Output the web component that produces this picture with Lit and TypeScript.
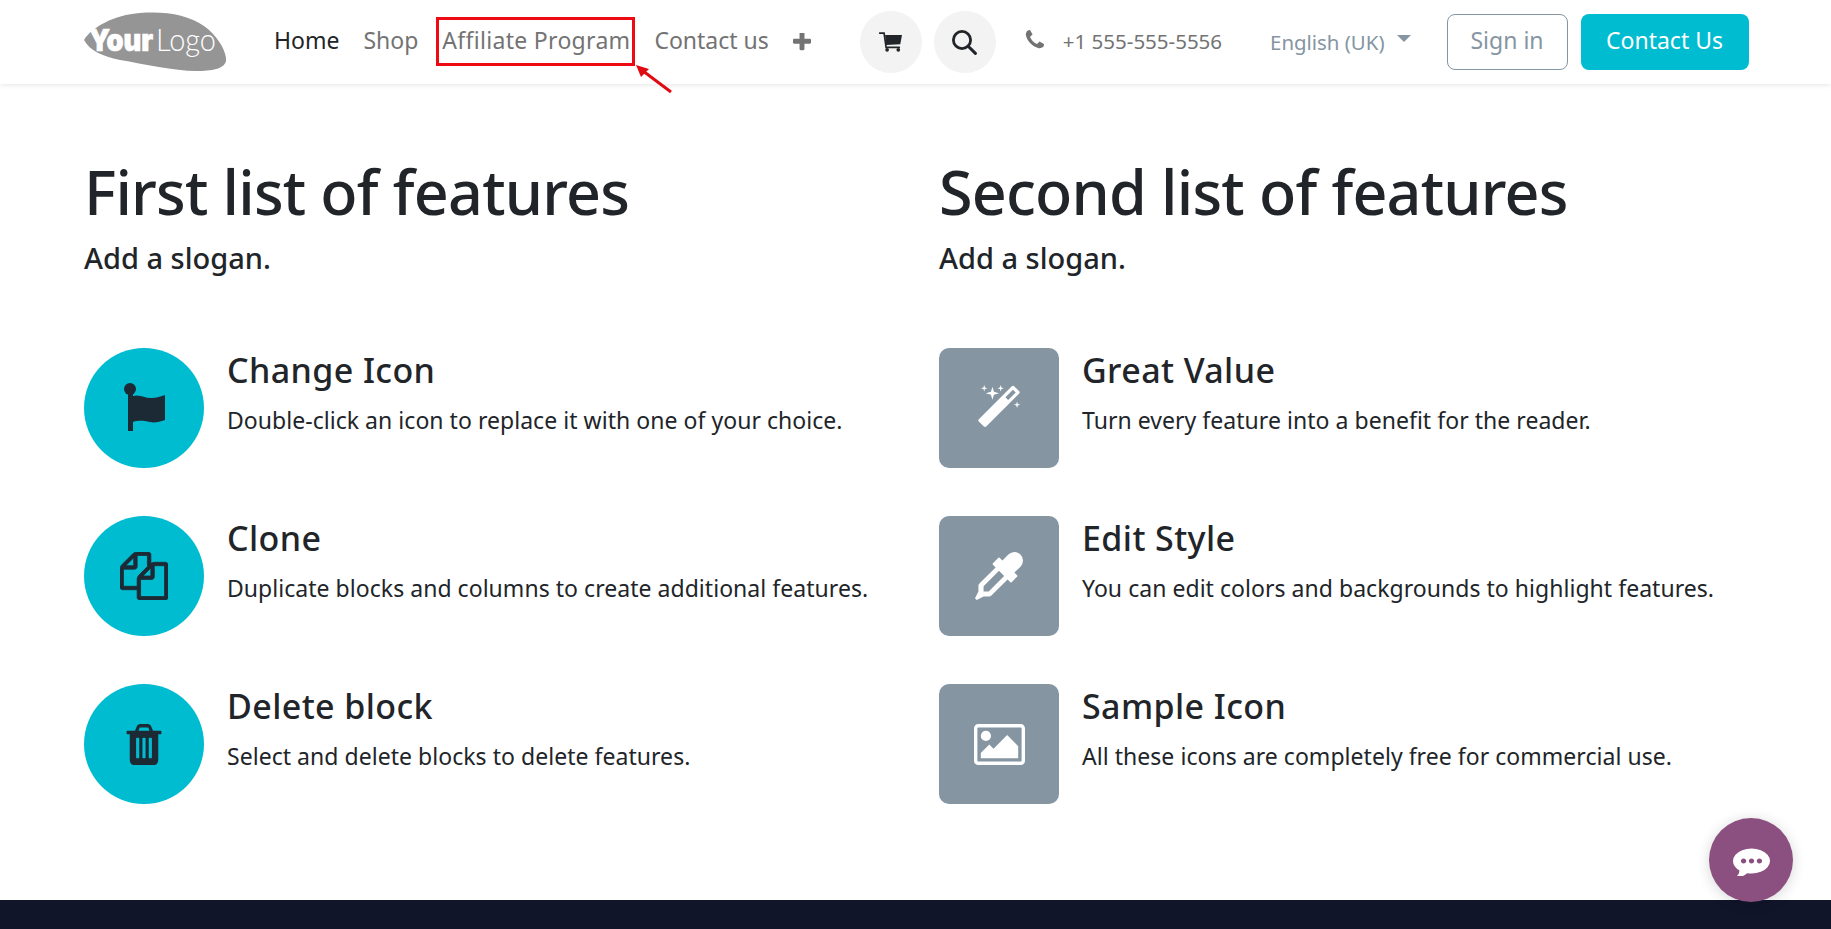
import { LitElement, html, css } from "lit";
import { customElement } from "lit/decorators.js";

const P = {
  phone: "M1600 1240q0 27-10 70.500t-21 68.500q-21 50-122 106-94 51-186 51-27 0-53-3.500t-57.500-12.500-47-14.500-55.500-20.500-49-18q-98-35-175-83-127-79-264-216t-216-264q-48-77-83-175-3-9-18-49t-20.500-55.500-14.500-47-12.500-57.500-3.500-53q0-92 51-186 56-101 106-122 25-11 68.500-21t70.500-10q14 0 21 3 18 6 53 76 11 19 30 54t35 63.500 31 53.500q3 4 17.500 25t21.500 35.500 7 28.500q0 20-28.500 50t-62 55-62 53-28.500 46q0 9 5 22.500t8.500 20.500 14 24 11.500 19q76 137 174 235t235 174q2 1 19 11.500t24 14 20.500 8.500 22.500 5q18 0 46-28.500t53-62 55-62 50-28.500q14 0 28.500 7t35.500 21.500 25 17.500q25 15 53.500 31t63.500 35 54 30q70 35 76 53 3 7 3 21z",
  plus: "M1600 736v192q0 40-28 68t-68 28h-416v416q0 40-28 68t-68 28h-192q-40 0-68-28t-28-68v-416h-416q-40 0-68-28t-28-68v-192q0-40 28-68t68-28h416v-416q0-40 28-68t68-28h192q40 0 68 28t28 68v416h416q40 0 68 28t28 68z",
  files: "M1696 384q40 0 68 28t28 68v1216q0 40-28 68t-68 28h-960q-40 0-68-28t-28-68v-288h-544q-40 0-68-28t-28-68v-672q0-40 20-88t48-76l408-408q28-28 76-48t88-20h416q40 0 68 28t28 68v328q68-40 128-40h416zm-544 213l-299 299h299v-299zm-640-384l-299 299h299v-299zm196 647l316-316v-416h-384v416q0 40-28 68t-68 28h-416v640h512v-256q0-40 20-88t48-76zm956 804v-1152h-384v416q0 40-28 68t-68 28h-416v640h896z",
  trash: "M704 1376v-704q0-14-9-23t-23-9h-64q-14 0-23 9t-9 23v704q0 14 9 23t23 9h64q14 0 23-9t9-23zm256 0v-704q0-14-9-23t-23-9h-64q-14 0-23 9t-9 23v704q0 14 9 23t23 9h64q14 0 23-9t9-23zm256 0v-704q0-14-9-23t-23-9h-64q-14 0-23 9t-9 23v704q0 14 9 23t23 9h64q14 0 23-9t9-23zm-544-992h448l-48-117q-7-9-17-11h-317q-10 2-17 11zm928 32v64q0 14-9 23t-23 9h-96v948q0 83-47 143.500t-113 60.500h-832q-66 0-113-58.500t-47-141.500v-952h-96q-14 0-23-9t-9-23v-64q0-14 9-23t23-9h309l70-167q15-37 54-63t79-26h320q40 0 79 26t54 63l70 167h309q14 0 23 9t9 23z",
  magic: "M1254 581l293-293-107-107-293 293zm447-293q0 27-18 45l-1286 1286q-18 18-45 18t-45-18l-198-198q-18-18-18-45t18-45l1286-1286q18-18 45-18t45 18l198 198q18 18 18 45zm-1351-190l98 30-98 30-30 98-30-98-98-30 98-30 30-98zm350 162l196 60-196 60-60 196-60-196-196-60 196-60 60-196zm930 478l98 30-98 30-30 98-30-98-98-30 98-30 30-98zm-640-640l98 30-98 30-30 98-30-98-98-30 98-30 30-98z",
  dropper: "M1698 94q94 94 94 226.500t-94 225.500l-225 223 104 104q10 10 10 23t-10 23l-210 210q-10 10-23 10t-23-10l-105-105-603 603q-37 37-90 37h-203l-256 128-64-64 128-256v-203q0-53 37-90l603-603-105-105q-10-10-10-23t10-23l210-210q10-10 23-10t23 10l104 104 223-225q93-94 225.500-94t226.500 94zm-1186 1378l576-576-192-192-576 576v192h192z",
  picture: "M576 576q0 80-56 136t-136 56-136-56-56-136 56-136 136-56 136 56 56 136zm1024 384v448h-1408v-192l320-320 160 160 512-512zm96-704h-1600q-13 0-22.500 9.500t-9.500 22.500v1216q0 13 9.500 22.500t22.500 9.500h1600q13 0 22.500-9.500t9.500-22.500v-1216q0-13-9.500-22.500t-22.500-9.500zm160 32v1216q0 66-47 113t-113 47h-1600q-66 0-113-47t-47-113v-1216q0-66 47-113t113-47h1600q66 0 113 47t47 113z",
  chat: "M640 896q0-53-37.500-90.500t-90.500-37.500-90.500 37.500-37.500 90.500 37.500 90.500 90.500 37.500 90.500-37.500 37.500-90.500zm384 0q0-53-37.500-90.500t-90.500-37.500-90.500 37.500-37.500 90.500 37.500 90.500 90.500 37.500 90.500-37.500 37.500-90.500zm384 0q0-53-37.500-90.500t-90.500-37.500-90.500 37.500-37.500 90.500 37.500 90.500 90.500 37.500 90.500-37.500 37.500-90.500zm384 0q0 174-120 321.500t-326 233-450 85.500q-110 0-211-18-173 173-435 229-52 10-86 13-12 1-22-6t-13-18q-4-15 20-37 5-5 23.500-21.500t25.500-23.500 23.500-25.500 24-31.500 20.500-37 20-48 14.500-57.500 12.500-72.500q-146-90-229.500-216.500t-83.500-269.500q0-174 120-321.500t326-233 450-85.500 450 85.500 326 233 120 321.500z",
};

const glyph = (cls: string, vb: string, d: string) =>
  html`<svg class=${cls} viewBox=${vb} preserveAspectRatio="none" aria-hidden="true"><path d=${d} fill="currentColor"></path></svg>`;

const flag = html`<svg class="i-flag" viewBox="0 0 41 48" aria-hidden="true">
  <g fill="currentColor">
    <circle cx="6" cy="6" r="6"></circle>
    <rect x="4" y="6" width="5" height="42"></rect>
    <path d="M9 13C16 11 20 15 27 15C33 15 37 13 41 12V37C35 39 31 40 26 39C20 38 15 37 9 39Z"></path>
  </g>
</svg>`;

const cart = html`<svg class="i-cart" viewBox="0 0 68 58" aria-hidden="true">
  <g fill="none" stroke="currentColor" stroke-width="5" stroke-linecap="round">
    <path d="M2 3H15L21 45H60"></path>
  </g>
  <path fill="currentColor" d="M18 8H68L63 36L21 38Z"></path>
  <circle cx="24" cy="52" r="5.5" fill="currentColor"></circle>
  <circle cx="57" cy="52" r="5.5" fill="currentColor"></circle>
</svg>`;

const search = html`<svg class="i-search" viewBox="0 0 25 25" aria-hidden="true">
  <circle cx="10" cy="10" r="8.6" fill="none" stroke="currentColor" stroke-width="2.8"></circle>
  <path d="M16.2 16.2L23.4 23.4" fill="none" stroke="currentColor" stroke-width="3" stroke-linecap="round"></path>
</svg>`;

const F1 = [
  { t: "Change Icon", d: "Double-click an icon to replace it with one of your choice.", i: flag },
  { t: "Clone", d: "Duplicate blocks and columns to create additional features.", i: glyph("i-files i-clone", "0 0 1792 1792", P.files) },
  { t: "Delete block", d: "Select and delete blocks to delete features.", i: glyph("i-trash", "128 128 1536 1536", P.trash) },
];
const F2 = [
  { t: "Great Value", d: "Turn every feature into a benefit for the reader.", i: glyph("i-magic", "0 0 1792 1792", P.magic) },
  { t: "Edit Style", d: "You can edit colors and backgrounds to highlight features.", i: glyph("i-files", "0 0 1792 1792", P.dropper) },
  { t: "Sample Icon", d: "All these icons are completely free for commercial use.", i: glyph("i-pic", "-64 128 1920 1536", P.picture) },
];

@customElement("app-root")
export class AppRoot extends LitElement {
  static styles = css`
    :host {
      display: flex;
      flex-direction: column;
      height: 929px;
      overflow: hidden;
      position: relative;
      background: #fff;
      color: #212529;
      font-family: "Noto Sans", "Open Sans", sans-serif;
    }
    .bar {
      flex: none;
      height: 84px;
      display: flex;
      align-items: center;
      padding-left: 84px;
      background: #fff;
      box-shadow: 0 1px 5px rgba(0, 0, 0, 0.1);
      position: relative;
      z-index: 1;
    }
    .logo { width: 142px; height: 62px; flex: none; }
    .nav { display: flex; align-items: center; gap: 24px; margin-left: 48px; font-size: 23px; color: #737373; padding-bottom: 5px; }
    .nav .wide { letter-spacing: 0.3px; }
    .nav .on { color: #212529; }
    .i-plus { width: 18px; height: 18px; color: #737373; margin-top: 5px; }
    .round {
      width: 62px; height: 62px; border-radius: 50%; background: #f3f3f3;
      display: flex; align-items: center; justify-content: center; flex: none; color: #212529;
    }
    .tools { display: flex; gap: 12px; margin-left: 49px; }
    .i-cart { width: 23px; height: 20px; }
    .i-search { width: 25px; height: 25px; }
    .phone { display: flex; align-items: center; gap: 19px; margin-left: 29px; font-size: 20.5px; color: #737373; padding-bottom: 2px; }
    .i-phone { width: 19px; height: 19px; margin-top: -4px; }
    .lang { display: flex; align-items: center; gap: 12px; margin-left: 48px; font-size: 20.4px; color: #8595a2; padding-bottom: 1px; }
    .caret { width: 0; height: 0; border-left: 7.5px solid transparent; border-right: 7.5px solid transparent; border-top: 7px solid #8595a2; margin-top: -6px; }
    .btn {
      height: 56px; box-sizing: border-box; display: flex; align-items: center; justify-content: center;
      border-radius: 8px; font-size: 23px; padding-bottom: 4px;
    }
    .signin { width: 121px; border: 1px solid #8595a2; color: #8595a2; margin-left: 36px; }
    .contact { width: 168px; background: #00bcd0; color: #fff; margin-left: 13px; }

    .main { flex: 1; display: grid; grid-template-columns: 810px 810px; column-gap: 45px; padding: 0 82px 0 84px; align-content: start; }
    .head { padding-top: 70px; height: 264px; box-sizing: border-box; }
    h1 { margin: 0; font-size: 61px; line-height: 76px; font-weight: 500; letter-spacing: -0.8px; }
    .slogan { margin: 10px 0 0; font-size: 29px; line-height: 36px; font-weight: 500; }
    .list { display: flex; flex-direction: column; gap: 48px; }
    .item { display: flex; gap: 23px; }
    .ic { width: 120px; height: 120px; flex: none; display: flex; align-items: center; justify-content: center; }
    .circle { border-radius: 50%; background: #00bcd0; color: #1b2a35; }
    .square { border-radius: 10px; background: #8595a2; color: #fff; }
    .i-flag { width: 41px; height: 48px; margin-top: -2px; }
    .i-files { width: 48px; height: 48px; }
    .i-clone path { stroke: currentColor; stroke-width: 30; }
    .i-trash { width: 38px; height: 41px; }
    .i-magic { width: 46px; height: 46px; }
    .i-pic { width: 51px; height: 41px; }
    h3 { margin: 0; font-size: 34px; line-height: 44px; font-weight: 500; letter-spacing: 0.4px; }
    .tx p { margin: 12px 0 0; font-size: 23px; line-height: 32px; letter-spacing: 0.04px; }

    .foot { flex: none; height: 29px; background: #11152a; }
    .chat {
      position: absolute; left: 1709px; top: 818px; width: 84px; height: 84px; border-radius: 50%;
      background: #8b4f80; color: #fff; display: flex; align-items: center; justify-content: center;
      box-shadow: 0 2px 14px rgba(0, 0, 0, 0.16);
    }
    .i-chat { width: 37px; height: 30px; margin-top: 2px; }
    .mark { position: absolute; left: 436px; top: 17px; width: 199px; height: 49px; box-sizing: border-box; border: 3px solid #ee0a12; z-index: 2; }
    .arrow { position: absolute; left: 630px; top: 60px; width: 50px; height: 40px; z-index: 2; }
  `;

  private feature(f: { t: string; d: string; i: unknown }, shape: string) {
    return html`<div class="item">
      <div class="ic ${shape}">${f.i}</div>
      <div class="tx"><h3>${f.t}</h3><p>${f.d}</p></div>
    </div>`;
  }

  render() {
    return html`
      <header class="bar">
        <svg class="logo" viewBox="0 0 142 62" aria-label="Your Logo">
          <path fill="#959595" d="M0 29C8 16 30 4 56 2C82 0 104 4 120 15C134 25 143 41 142 50C140 58 128 60 112 60C90 60 60 53 36 49C18 45 6 40 0 29Z"></path>
          <text x="5" y="40" font-family="Inter, Lato, sans-serif" font-size="30" font-weight="900" fill="#fff" stroke="#fff" stroke-width="0.7" textLength="64" lengthAdjust="spacingAndGlyphs">Your</text>
          <text x="72" y="40" font-family="Lato, sans-serif" font-size="32" font-weight="300" fill="#fff" textLength="60" lengthAdjust="spacingAndGlyphs">Logo</text>
        </svg>
        <nav class="nav">
          <span class="on">Home</span><span>Shop</span><span class="wide">Affiliate Program</span><span>Contact us</span>
          ${glyph("i-plus", "192 192 1408 1408", P.plus)}
        </nav>
        <div class="tools">
          <div class="round">${cart}</div>
          <div class="round">${search}</div>
        </div>
        <div class="phone">${glyph("i-phone", "128 128 1472 1472", P.phone)}<span>+1 555-555-5556</span></div>
        <div class="lang"><span>English (UK)</span><i class="caret"></i></div>
        <div class="btn signin">Sign in</div>
        <div class="btn contact">Contact Us</div>
      </header>
      <main class="main">
        <section>
          <div class="head"><h1>First list of features</h1><p class="slogan">Add a slogan.</p></div>
          <div class="list">${F1.map((f) => this.feature(f, "circle"))}</div>
        </section>
        <section>
          <div class="head"><h1>Second list of features</h1><p class="slogan">Add a slogan.</p></div>
          <div class="list">${F2.map((f) => this.feature(f, "square"))}</div>
        </section>
      </main>
      <footer class="foot"></footer>
      <div class="chat">${glyph("i-chat", "0 128 1792 1536", P.chat)}</div>
      <div class="mark"></div>
      <svg class="arrow" viewBox="0 0 50 40" aria-hidden="true">
        <path d="M41 32L9 8" stroke="#e00a12" stroke-width="3" fill="none"></path>
        <path d="M6 5L19 9L11 17Z" fill="#e00a12"></path>
      </svg>
    `;
  }
}
